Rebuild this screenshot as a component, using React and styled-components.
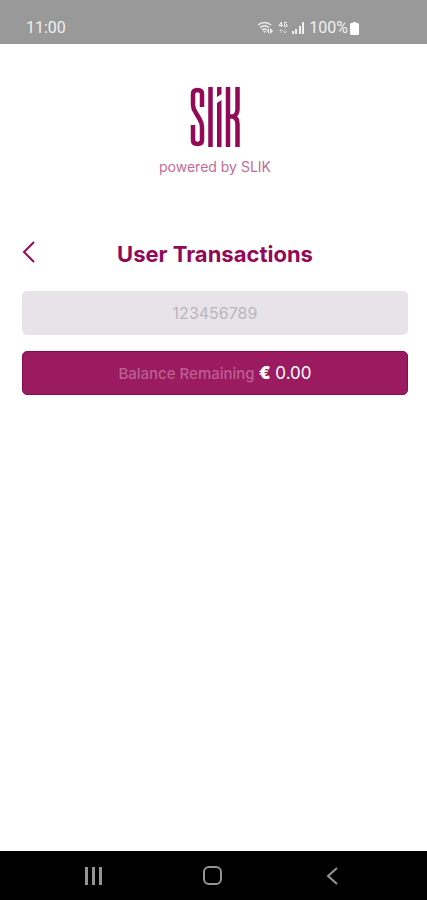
import styled, { createGlobalStyle } from 'styled-components';

const GlobalStyle = createGlobalStyle`
	:root {
		--main-color: #920a57;
		--field-color: #e8e3e9;
		--font-base: 16px;
	}

	* {
		box-sizing: border-box;
	}

	body {
		margin: 0;
		background-color: #fff;
		font-family: Inter, 'Liberation Sans', sans-serif;
	}
`;

const Screen = styled.div`
	display: flex;
	flex-direction: column;
	min-height: 100vh;
`;

const StatusBar = styled.header`
	display: flex;
	align-items: flex-end;
	justify-content: space-between;
	height: 44px;
	padding: 0 68px 7px 26px;
	background-color: #999;
	color: #f0f0f0;
	font-family: Roboto, 'Liberation Sans', sans-serif;
	font-size: var(--font-base);
	line-height: 18px;
`;

const StatusIcons = styled.div`
	display: flex;
	align-items: center;
	gap: 4px;
`;

const Battery = styled.span`
	display: flex;
	align-items: center;
	gap: 2px;
`;

const Content = styled.main`
	flex: 1;
	padding: 43px 19px 0 22px;
`;

const Brand = styled.div`
	display: flex;
	flex-direction: column;
	align-items: center;
	gap: 10px;
	color: var(--main-color);
`;

const Tagline = styled.p`
	margin: 0;
	color: #bd6d98;
	font-size: 14px;
	line-height: 20px;
`;

const TitleRow = styled.div`
	display: grid;
	grid-template-columns: 24px 1fr 24px;
	align-items: center;
	margin: 63px 0 23px;
`;

const BackButton = styled.button`
	display: flex;
	padding: 0;
	border: none;
	background: none;
	color: var(--main-color);
	cursor: pointer;
`;

const Title = styled.h1`
	margin: 0;
	color: var(--main-color);
	font-size: 22px;
	font-weight: 700;
	line-height: 28px;
	text-align: center;
`;

const AccountInput = styled.input`
	display: block;
	width: 100%;
	height: 44px;
	margin-bottom: 16px;
	padding: 0 16px;
	border: none;
	border-radius: 5px;
	background-color: var(--field-color);
	font-family: inherit;
	font-size: var(--font-base);
	text-align: center;

	&::placeholder {
		color: #bab6bb;
		opacity: 1;
	}
`;

const Balance = styled.div`
	display: flex;
	align-items: center;
	justify-content: center;
	gap: 4px;
	height: 44px;
	border: 1px solid #8b0951;
	border-radius: 5px;
	background-color: #9b1b61;
`;

const BalanceLabel = styled.span`
	color: #bd5f93;
	font-size: 15px;
	font-weight: 500;
`;

const BalanceAmount = styled.span`
	color: #fff;
	font-size: 17px;
`;

const Currency = styled.span`
	font-weight: 900;
`;

const NavBar = styled.nav`
	display: flex;
	align-items: center;
	justify-content: space-around;
	height: 49px;
	padding: 0 34px;
	background-color: #000;
`;

const NavButton = styled.button`
	display: flex;
	padding: 0;
	border: none;
	background: none;
	color: #959595;
	cursor: pointer;
`;

function Logo() {
	return (
		<svg width="50" height="60" viewBox="0 0 50 60" role="img" aria-label="Slik">
			<g fill="none" stroke="currentColor" strokeWidth="4.500">
				<path d="M12 20V7Q12 3 7.500 3Q3 3 3 7V18Q3 22 6 26L9.500 32Q12 36 12 40V53Q12 57 7.500 57Q3 57 3 53V38" />
				<path d="M20.500 0V60M38 0V60M47.500 0V22Q47.500 28 43 29.500Q47.500 31 47.500 37V60M38 29.500H43" />
			</g>
			<path d="M27 0h4.500v7l-4.500 3zM27 16l4.500-3v47H27z" fill="currentColor" />
		</svg>
	);
}

function WifiIcon() {
	return (
		<svg width="17" height="14" viewBox="0 0 17 14" aria-hidden="true">
			<g fill="none" stroke="currentColor" strokeWidth="1.500">
				<path d="M1 4Q7.500-1 14 4M3 6.500Q7.500 3 12 6.500M5 9Q7.500 7 10 9" />
			</g>
			<path d="M6 10h3l-1.500 2z" fill="currentColor" />
			<path d="M10 10l2-3v6zM13 7l3 3-3 3z" fill="currentColor" />
		</svg>
	);
}

function NetworkIcon() {
	return (
		<svg width="10" height="14" viewBox="0 0 10 14" fill="none" stroke="currentColor" aria-hidden="true">
			<path d="M3.500 6V1L1 4.500H5M9 1.500H6.500V5.500H9V3.500H8" />
			<path d="M3 12V8.500M1.500 10L3 8.500L4.500 10M7 8.500V12M5.500 10.500L7 12L8.500 10.500" opacity="0.6" />
		</svg>
	);
}

function SignalIcon() {
	return (
		<svg width="13" height="12" viewBox="0 0 13 12" fill="currentColor" aria-hidden="true">
			<path d="M0 9h2v3H0zM3 7h2v5H3zM7 4h2v8H7zM10 0h2v12h-2z" />
		</svg>
	);
}

function App() {
	return (
		<>
			<GlobalStyle />
			<Screen>
				<StatusBar>
					<span>11:00</span>
					<StatusIcons>
						<WifiIcon />
						<NetworkIcon />
						<SignalIcon />
						<Battery>
							100%
							<svg width="9" height="13" viewBox="0 0 9 13" fill="#fff" aria-hidden="true">
								<path d="M3 0h3v1h2l1 1v10l-1 1H1l-1-1V2l1-1h2z" />
							</svg>
						</Battery>
					</StatusIcons>
				</StatusBar>
				<Content>
					<Brand>
						<Logo />
						<Tagline>powered by SLIK</Tagline>
					</Brand>
					<TitleRow>
						<BackButton type="button" aria-label="Back">
							<svg width="14" height="28" viewBox="0 0 14 28" fill="none" stroke="currentColor" strokeWidth="2">
								<path d="M12 2L2 12L12 22" />
							</svg>
						</BackButton>
						<Title>User Transactions</Title>
					</TitleRow>
					<AccountInput type="text" placeholder="123456789" aria-label="Account number" />
					<Balance>
						<BalanceLabel>Balance Remaining</BalanceLabel>
						<BalanceAmount>
							<Currency>€</Currency> 0.00
						</BalanceAmount>
					</Balance>
				</Content>
				<NavBar>
					<NavButton type="button" aria-label="Recent apps">
						<svg width="20" height="20" viewBox="0 0 20 20" fill="currentColor">
							<path d="M1 1h3v18H1zM8 1h3v18H8zM15 1h3v18h-3z" />
						</svg>
					</NavButton>
					<NavButton type="button" aria-label="Home">
						<svg width="20" height="20" viewBox="0 0 20 20" fill="none" stroke="currentColor" strokeWidth="2">
							<rect x="1" y="1" width="17" height="17" rx="5" />
						</svg>
					</NavButton>
					<NavButton type="button" aria-label="Go back">
						<svg width="20" height="20" viewBox="0 0 20 20" fill="none" stroke="currentColor" strokeWidth="2">
							<path d="M14 2L5 10L14 18" />
						</svg>
					</NavButton>
				</NavBar>
			</Screen>
		</>
	);
}

export default App;
